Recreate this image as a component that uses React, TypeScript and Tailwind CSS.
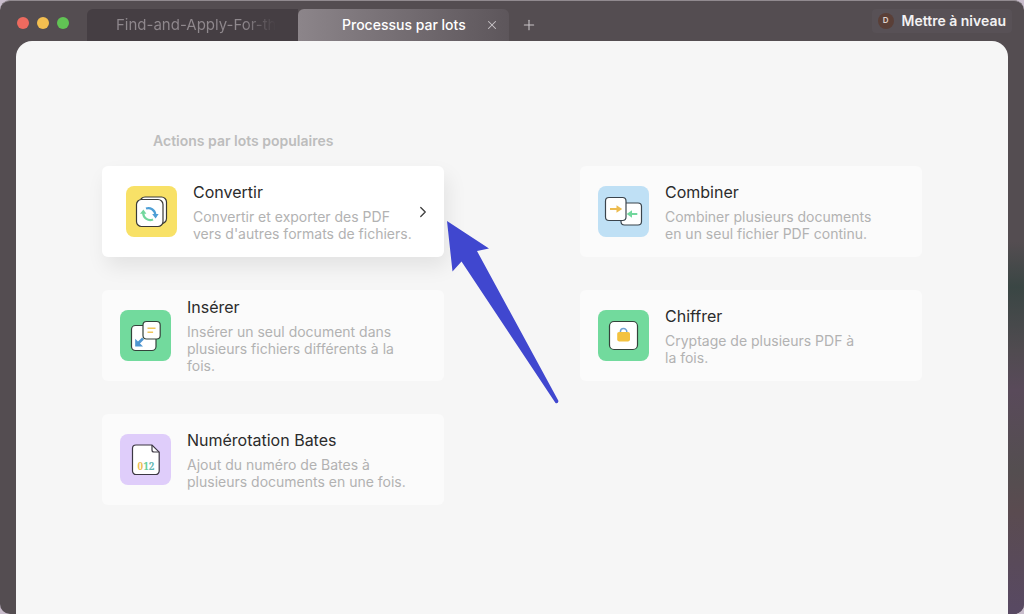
import cn from "clsx";
import { ChevronRight, Plus, X } from "lucide-react";
import { FC, ReactNode } from "react";

const ConvertIcon: FC = () => (
  <svg viewBox="0 0 51 51" className="size-full" fill="none" aria-hidden="true">
    <rect x="14" y="11" width="26.5" height="26.5" rx="5" fill="#fff" stroke="#3a3a36" strokeWidth="1.2" />
    <rect x="10.5" y="13.5" width="26.5" height="27" rx="5" fill="#fff" stroke="#3a3a36" strokeWidth="1.2" />
    <path d="M20 22.5a7 7 0 0 1 9.3 6" stroke="#4e9fd6" strokeWidth="2.2" />
    <path d="M26.2 28h6.4l-3 4.4z" fill="#4e9fd6" />
    <path d="M27 33.4a7 7 0 0 1-9.8-6.400" stroke="#72d79d" strokeWidth="2.2" />
    <path d="M14 27.800h6.400l-3-4.400z" fill="#72d79d" />
  </svg>
);

const CombineIcon: FC = () => (
  <svg viewBox="0 0 51 51" className="size-full" fill="none" aria-hidden="true">
    <rect x="23" y="17" width="20.5" height="22" rx="3.5" fill="#fff" stroke="#3b444c" strokeWidth="1.2" />
    <rect x="7.5" y="11.5" width="20.5" height="23" rx="3.5" fill="#fff" stroke="#3b444c" strokeWidth="1.2" />
    <path d="M12 23h8" stroke="#edbc4f" strokeWidth="2.2" />
    <path d="M18.500 19.200l5.700 3.800-5.700 3.800z" fill="#edbc4f" />
    <path d="M32 28h7.300" stroke="#72d79d" strokeWidth="2" />
    <path d="M34 24.200L28.600 28l5.400 3.800z" fill="#72d79d" />
  </svg>
);

const InsertIcon: FC = () => (
  <svg viewBox="0 0 51 51" className="size-full" fill="none" aria-hidden="true">
    <rect x="11.5" y="15.5" width="24.5" height="25" rx="4" fill="#fff" stroke="#34433b" strokeWidth="1.2" />
    <path d="M23 28.500l-5 5" stroke="#4e95d0" strokeWidth="2.6" />
    <path d="M15.200 28.800v7.600h7.800z" fill="#4e95d0" />
    <rect x="23" y="11.5" width="17.2" height="17.5" rx="3.5" fill="#fff" stroke="#34433b" strokeWidth="1.2" />
    <path d="M27.500 18.300h8M27.500 22.300h5.600" stroke="#f0c65c" strokeWidth="1.6" />
  </svg>
);

const EncryptIcon: FC = () => (
  <svg viewBox="0 0 51 51" className="size-full" fill="none" aria-hidden="true">
    <rect x="11.5" y="11.5" width="28" height="28" rx="4.5" fill="#fff" stroke="#34433b" strokeWidth="1.2" />
    <path d="M22.400 23v-1.200a3.200 3.200 0 0 1 6.400 0V23" stroke="#6fa3d4" strokeWidth="1.5" />
    <rect x="19.2" y="22" width="12.8" height="9.4" rx="1.8" fill="#f3c23f" />
  </svg>
);

const BatesIcon: FC = () => (
  <svg viewBox="0 0 51 51" className="size-full" fill="none" aria-hidden="true">
    <path
      d="M16 11h16l7.200 7.200V37a3.500 3.500 0 0 1-3.500 3.500H16a3.500 3.500 0 0 1-3.500-3.500V14.500A3.500 3.500 0 0 1 16 11z"
      fill="#fff"
      stroke="#3c3743"
      strokeWidth="1.2"
    />
    <path d="M32 11v5a2 2 0 0 0 2 2h5.200" stroke="#3c3743" strokeWidth="1.2" />
    <text x="26" y="35.5" textAnchor="middle" fontFamily="Noto Serif, DejaVu Serif, serif" fontSize="10" fontWeight="700">
      <tspan fill="#eebd4e">0</tspan>
      <tspan fill="#68cf95">1</tspan>
      <tspan fill="#62b6b2">2</tspan>
    </text>
  </svg>
);

interface Action {
  title: string;
  description: string;
  icon: ReactNode;
  tile: string;
  active?: boolean;
}

const actions: Action[] = [
  {
    title: "Convertir",
    description: "Convertir et exporter des PDF\nvers d'autres formats de fichiers.",
    icon: <ConvertIcon />,
    tile: "bg-[#f8e167]",
    active: true,
  },
  {
    title: "Combiner",
    description: "Combiner plusieurs documents\nen un seul fichier PDF continu.",
    icon: <CombineIcon />,
    tile: "bg-[#bfe0f5]",
  },
  {
    title: "Insérer",
    description: "Insérer un seul document dans\nplusieurs fichiers différents à la\nfois.",
    icon: <InsertIcon />,
    tile: "bg-[#72da9d]",
  },
  {
    title: "Chiffrer",
    description: "Cryptage de plusieurs PDF à\nla fois.",
    icon: <EncryptIcon />,
    tile: "bg-[#72da9d]",
  },
  {
    title: "Numérotation Bates",
    description: "Ajout du numéro de Bates à\nplusieurs documents en une fois.",
    icon: <BatesIcon />,
    tile: "bg-[#dfcdfa]",
  },
];

const ActionCard: FC<Action> = ({ title, description, icon, tile, active }) => (
  <button
    type="button"
    className={cn(
      "flex h-[91px] w-full items-center gap-4 rounded-md text-left",
      active ? "bg-white pl-6 pr-3 shadow-[4px_10px_20px_rgba(0,0,0,0.08)]" : "bg-[#fbfbfb] px-[18px]"
    )}
  >
    <span className={cn("size-[51px] shrink-0 rounded-lg", tile)}>{icon}</span>
    <span className="flex min-w-0 grow flex-col gap-1 pb-0.5">
      <span className="text-base leading-6 text-[#2b2b2b]">{title}</span>
      <span className="whitespace-pre text-sm leading-[17px] text-[#b2b2b2]">{description}</span>
    </span>
    {active && <ChevronRight className="size-[18px] shrink-0 text-[#444]" strokeWidth={1.8} />}
  </button>
);

const TitleBar: FC = () => (
  <header className="flex h-10 items-end">
    <div className="flex h-9 w-[87px] shrink-0 items-center gap-2 pl-[17px]">
      <span className="size-3 rounded-full bg-[#ed6a5f]" />
      <span className="size-3 rounded-full bg-[#f4bf50]" />
      <span className="size-3 rounded-full bg-[#61c454]" />
    </div>
    <nav className="flex h-8">
      <button
        type="button"
        className="w-[211px] whitespace-nowrap rounded-tl-md bg-[#453e43] pl-[29px] text-left text-[15px]"
      >
        <span className="inline-block bg-linear-to-r from-[#8f888d] from-80% to-[#453e43] bg-clip-text text-transparent">
          Find-and-Apply-For-th
        </span>
      </button>
      <div className="flex w-[211px] items-center justify-between rounded-t-md bg-linear-to-r from-[#8c858a] to-[#5d565b] pl-11 pr-2.5">
        <button type="button" className="text-sm font-medium text-white">
          Processus par lots
        </button>
        <button type="button" aria-label="Fermer l'onglet" className="text-[#c9c5c8]">
          <X className="size-3.5" strokeWidth={1.8} />
        </button>
      </div>
      <button type="button" aria-label="Nouvel onglet" className="ml-3 text-[#c9c5c8]">
        <Plus className="size-4" strokeWidth={1.6} />
      </button>
    </nav>
    <button
      type="button"
      className="mb-2 ml-auto mr-3 flex h-6 items-center gap-2 whitespace-nowrap rounded bg-[#585156] px-1.5 text-sm font-semibold text-[#f3f1f2]"
    >
      <span className="flex size-4 items-center justify-center rounded-full bg-[#5a3f37] text-[8px] text-[#e0d3ce]">D</span>
      Mettre à niveau
    </button>
  </header>
);

const App: FC = () => (
  <div className="min-h-screen bg-[#c9bdcc] font-[Inter,'Liberation_Sans',sans-serif]">
    <div className="flex min-h-screen flex-col overflow-hidden rounded-[10px] border-t border-[#918a8f] bg-[#544d51]">
      <TitleBar />
      <div className="flex grow bg-[linear-gradient(#544d51,#544d51_35%,#3a4644_43%,#504b50_54%,#594a5a_61%,#544e50_75%,#5a4b50_82%,#584963)] bg-[length:16px_100%] bg-right bg-no-repeat px-4">
        <main className="relative grow rounded-t-2xl bg-[#f6f6f6] px-[86px] pb-10 pt-[90px]">
          <h1 className="pl-[51px] text-sm font-semibold leading-5 text-[#bdbdbd]">Actions par lots populaires</h1>
          <div className="mt-[15px] grid grid-cols-2 gap-x-[136px] gap-y-[33px]">
            {actions.map((action) => (
              <ActionCard key={action.title} {...action} />
            ))}
          </div>
          <svg
            viewBox="0 0 112 184"
            className="pointer-events-none absolute left-[431px] top-[180px] h-[184px] w-28"
            aria-hidden="true"
          >
            <path d="M0 0L42 27.500L30 30L111.500 180Q111 183 108.500 182L14.500 40.500L5.500 50.500Z" fill="#4047cf" />
          </svg>
        </main>
      </div>
    </div>
  </div>
);

export default App;
